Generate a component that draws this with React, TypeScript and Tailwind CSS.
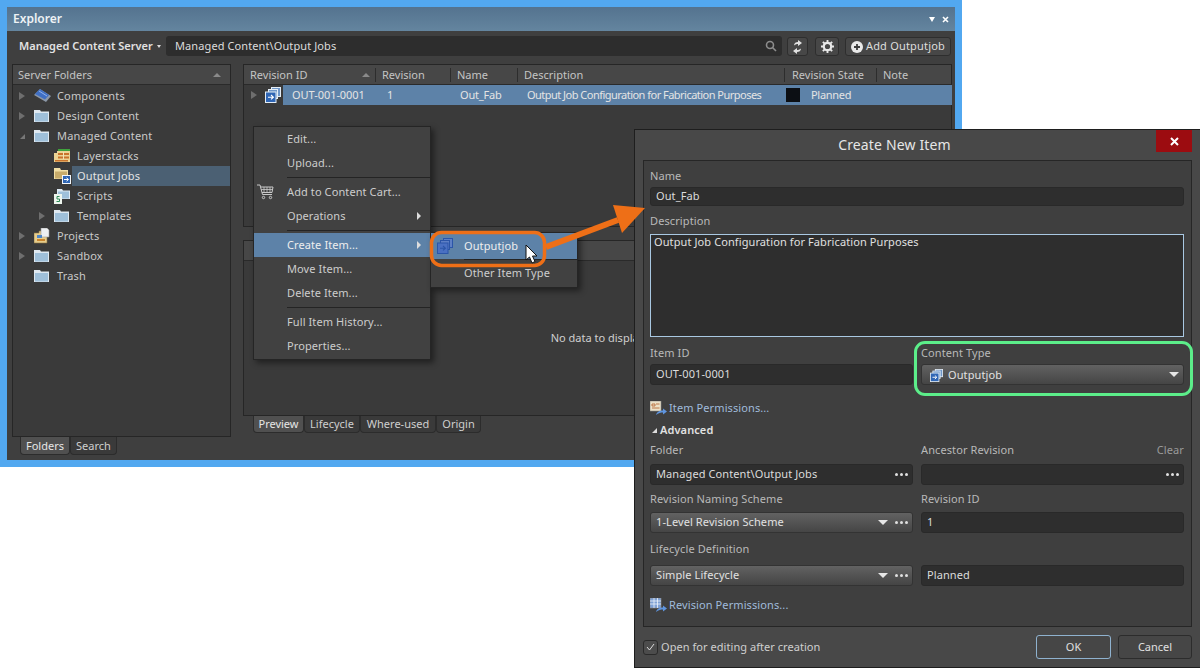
import React from "react";

const Tri = ({ down = false }: { down?: boolean }) =>
  down ? (
    <svg width="7" height="7" viewBox="0 0 7 7"><path d="M6 1V6H1Z" fill="#777" /></svg>
  ) : (
    <svg width="6" height="8" viewBox="0 0 6 8"><path d="M0 0L6 4L0 8Z" fill="#6e6e6e" /></svg>
  );

const Folder = () => (
  <svg width="15" height="14" viewBox="0 0 15 14">
    <path d="M0 1H6L7 2.500H15V13H0Z" fill="#dfe9f1" />
    <rect x="1" y="4" width="13" height="8.500" fill="#9fc0da" />
  </svg>
);

const Chip = () => (
  <svg width="17" height="14" viewBox="0 0 17 14">
    <path d="M6 0L17 7L12 13L0 6Z" fill="#8c98a8" />
    <path d="M6 0L15 6L11 10.5L1 5Z" fill="#3f6fc4" />
    <path d="M5 2L13 7" stroke="#8fb0ea" strokeWidth="1" />
  </svg>
);

const Layers = () => (
  <svg width="16" height="15" viewBox="0 0 16 15">
    <rect x="4" y="0" width="12" height="3" fill="#3fa33c" />
    <path d="M0 4H3V2H16V13H0Z" fill="#ecd394" />
    <path d="M4 4H15V6H4ZM4 7.5H15V9.5H4ZM1 11H14V12.5H1Z" fill="#c9742c" />
    <path d="M9.5 3V10" stroke="#f3e3b8" strokeWidth="1" />
  </svg>
);

const JobsFolder = () => (
  <svg width="17" height="16" viewBox="0 0 17 16">
    <path d="M0 0H6L7 2H14V11H0Z" fill="#f1dfa6" />
    <rect x="1" y="3.5" width="12" height="7" fill="#c7ab6a" />
    <rect x="8" y="7" width="9" height="9" fill="#f3f7fb" />
    <rect x="9" y="8" width="7" height="7" fill="#2f66b5" />
    <path d="M10 11.5H14M12.5 9.8L14.5 11.5L12.5 13.2" stroke="#fff" strokeWidth="1" fill="none" />
  </svg>
);

const ScriptsFolder = () => (
  <svg width="16" height="16" viewBox="0 0 16 16">
    <path d="M3 1H8L9 2.5H16V11H3Z" fill="#dfeaf3" />
    <rect x="4" y="3.5" width="11" height="7" fill="#9fc0da" />
    <rect x="0" y="6" width="8" height="10" fill="#eef5ee" />
    <path d="M5.5 8.5H3V11H5.5V13.5H2.5" stroke="#2e8a57" strokeWidth="1" fill="none" />
  </svg>
);

const Projects = () => (
  <svg width="16" height="16" viewBox="0 0 16 16">
    <path d="M0 5H5V3H13V15H0Z" fill="#e7cd8c" stroke="#8c7442" strokeWidth="0.6" />
    <path d="M7 0H13L15 2V9H7Z" fill="#eef0f2" stroke="#9a9a9a" strokeWidth="0.6" />
    <path d="M3 7H8V10H3Z" fill="#4f86c6" />
    <path d="M3 11H11V13H3Z" fill="#c9842c" />
  </svg>
);

const Stack = ({ dark = false, size = 16 }: { dark?: boolean; size?: number }) => {
  const line = dark ? "#2b55a8" : "#e4edf6";
  const back = dark ? "#5e7fc4" : "#6f97c9";
  const fill = dark ? "#4a70c2" : "#2f66b5";
  const mark = dark ? "#2b55a8" : "#ffffff";
  return (
    <svg width={size} height={size} viewBox="0 0 16 16">
      <rect x="6.5" y="0.5" width="9" height="9" fill={back} stroke={line} />
      <rect x="3.5" y="2.5" width="9" height="9" fill={back} stroke={line} />
      <rect x="0.5" y="5" width="10.5" height="10.5" fill={fill} stroke={line} />
      <path d="M3 10.2H8M6 8L8.4 10.2L6 12.4" stroke={mark} strokeWidth="1.1" fill="none" />
    </svg>
  );
};

const Cart = () => (
  <svg width="17" height="16" viewBox="0 0 17 16" fill="none" stroke="#c9c9c9">
    <path d="M0 1H3L5.5 10.5H15" />
    <path d="M3.5 3H16L15 8.5H5" />
    <path d="M7 3V8.5M10 3V8.5M13 3V8.5M4.2 5.5H15.5" strokeWidth="0.8" />
    <circle cx="6.5" cy="13.5" r="1.2" />
    <circle cx="13.5" cy="13.5" r="1.2" />
  </svg>
);

const Perm = ({ grid = false }: { grid?: boolean }) => (
  <svg width="17" height="15" viewBox="0 0 17 15">
    <rect x="0" y="0" width="11" height="10" fill={grid ? "#7fa2d6" : "#ece2c8"} stroke="#8d8d8d" strokeWidth="0.6" />
    {grid ? (
      <path d="M0 3H11M0 6H11M4 0V10M7.5 0V10" stroke="#eef3fa" strokeWidth="0.8" />
    ) : (
      <path d="M2 3H5V5H2ZM6 3H9.5M2 7H9.5" stroke="#b86b3a" strokeWidth="0.9" fill="none" />
    )}
    <path d="M6 14C7 10.5 10 9.5 13 9.5V7.5L17 10.5L13 13.5V11.5C11 11.5 8.5 12 6 14Z" fill="#5f95df" />
  </svg>
);

const Dots = () => (
  <span className="flex gap-[2px]">
    <span className="w-[3px] h-[3px] rounded-full bg-[#e0e0e0]" />
    <span className="w-[3px] h-[3px] rounded-full bg-[#e0e0e0]" />
    <span className="w-[3px] h-[3px] rounded-full bg-[#e0e0e0]" />
  </span>
);

const Caret = () => (
  <span className="w-0 h-0 border-x-[5px] border-x-transparent border-t-[5px] border-t-[#e6e6e6]" />
);

function TreeRow({
  label, icon, indent = false, arrow, selected = false,
}: { label: string; icon: React.ReactNode; indent?: boolean; arrow?: "right" | "down"; selected?: boolean }) {
  return (
    <div className={"flex items-center h-5 " + (indent ? "pl-[26px]" : "pl-[6px]")}>
      <span className="w-[15px] flex items-center">{arrow && <Tri down={arrow === "down"} />}</span>
      <span className="w-[23px] flex items-center">{icon}</span>
      <span className={"flex-1 h-5 -ml-[5px] pl-[5px] flex items-center " + (selected ? "bg-[#4b6073] text-[#e4e4e4]" : "")}>
        {label}
      </span>
    </div>
  );
}

function MenuItem({ label, icon, sub = false, active = false }: { label: string; icon?: React.ReactNode; sub?: boolean; active?: boolean }) {
  return (
    <div className={"relative flex items-center h-6 pl-[3px] pr-[9px] " + (active ? "bg-[#5d82a8] text-[#eeeeee]" : "")}>
      <span className="w-[30px] flex items-center">{icon}</span>
      <span className="flex-1">{label}</span>
      {sub && <span className="w-0 h-0 border-y-[4px] border-y-transparent border-l-[4px] border-l-[#dddddd]" />}
    </div>
  );
}

const Sep = () => <div className="ml-[33px] h-px bg-[#242424] my-[2px]" />;

const Label = ({ children, className = "" }: { children: React.ReactNode; className?: string }) => (
  <div className={"h-4 flex items-center text-[#b9b9b9] " + className}>{children}</div>
);

const Input = ({ children, className = "" }: { children?: React.ReactNode; className?: string }) => (
  <div className={"flex items-center justify-between pl-[5px] pr-[4px] bg-[#2e2e2e] rounded-[3px] border border-[#292929] text-[#dcdcdc] " + className}>
    {children}
  </div>
);

const Select = ({ children }: { children: React.ReactNode }) => (
  <div className="flex items-center justify-between pl-[5px] pr-[4px] h-[21px] rounded-[3px] border border-[#333] bg-linear-to-b from-[#626262] to-[#454545] text-[#e2e2e2]">
    {children}
  </div>
);

const Tab = ({ label, active = false, className = "" }: { label: string; active?: boolean; className?: string }) => (
  <div className={"flex items-center justify-center pt-px rounded-b-[4px] border border-t-0 border-[#2c2c2c] " + (active ? "bg-[#505050] text-[#e6e6e6] " : "bg-[#3a3a3a] text-[#cfcfcf] ") + className}>
    {label}
  </div>
);

const columns = "grid grid-cols-[132px_75px_67px_267px_92px_75px]";

export default function App() {
  return (
    <div className="relative w-[1200px] h-[668px] overflow-hidden bg-white text-[11px] text-[#c9c9c9] font-['Noto_Sans','Open_Sans',sans-serif]">
      {/* Explorer window */}
      <div className="absolute left-0 top-0 w-[962px] h-[467px] bg-[#52a8f0] p-[7px]">
        <div className="flex flex-col h-full bg-[#3f3f3f]">
          <div className="flex items-center justify-between h-6 pl-[6px] pr-[6px] bg-linear-to-b from-[#54738f] to-[#64859f] text-[12px] font-semibold text-[#eef2f5]">
            <span>Explorer</span>
            <span className="flex items-center gap-[7px] text-white">
              <span className="w-0 h-0 border-x-[3px] border-x-transparent border-t-[5px] border-t-white" />
              <svg width="7" height="7" viewBox="0 0 7 7"><path d="M1 1L6 6M6 1L1 6" stroke="#fff" strokeWidth="1.6" /></svg>
            </span>
          </div>

          <div className="flex items-start h-[33px] pt-[5px] pl-[12px] pr-[4px]">
            <span className="w-[136px] h-5 font-semibold text-[#e2e2e2] flex items-center gap-[4px] shrink-0 whitespace-nowrap">
              Managed Content Server
              <span className="w-0 h-0 border-x-[2.5px] border-x-transparent border-t-[3px] border-t-[#dddddd]" />
            </span>
            <div className="ml-[11px] flex items-center justify-between w-[616px] h-5 pl-[9px] pr-[5px] bg-[#2d2d2d] rounded-[3px] text-[#dcdcdc] tracking-[0.1px]">
              Managed Content\Output Jobs
              <svg width="12" height="12" viewBox="0 0 12 12" fill="none" stroke="#8d8d8d" strokeWidth="1.6"><circle cx="5" cy="5" r="3.5" /><path d="M7.5 7.5L11 11" /></svg>
            </div>
            <div className="ml-[5px] mt-px flex items-center justify-center w-[21px] h-[19px] rounded-[3px] border border-[#2e2e2e] bg-[#474747]">
              <svg width="11" height="14" viewBox="0 0 11 14" fill="#e2e2e2"><path d="M2 5.5C2 3 4 2 6 2V0L10 3L6 6V4C5 4 3.5 4.3 2 5.5Z" /><path d="M9 8.5C9 11 7 12 5 12V14L1 11L5 8V10C6 10 7.5 9.7 9 8.5Z" /></svg>
            </div>
            <div className="ml-[7px] mt-px flex items-center justify-center w-[24px] h-[19px] rounded-[3px] border border-[#2e2e2e] bg-[#474747]">
              <svg width="13" height="13" viewBox="0 0 14 14"><circle cx="7" cy="7" r="4" fill="none" stroke="#e8e8e8" strokeWidth="2.4" /><path d="M7 0V3M7 11V14M0 7H3M11 7H14M2 2L4 4M10 10L12 12M12 2L10 4M4 10L2 12" stroke="#e8e8e8" strokeWidth="2" /></svg>
            </div>
            <div className="ml-[6px] mt-px flex items-center gap-[3px] justify-center w-[106px] h-[19px] rounded-[3px] border border-[#2e2e2e] bg-[#474747] text-[#dedede] tracking-[0.2px]">
              <svg width="12" height="12" viewBox="0 0 12 12"><circle cx="6" cy="6" r="6" fill="#eaeaea" /><path d="M6 3V9M3 6H9" stroke="#3d3d3d" strokeWidth="1.8" /></svg>
              Add Outputjob
            </div>
          </div>

          <div className="flex gap-[12px] pl-[5px]">
            <div className="flex flex-col">
              <div className="w-[219px] h-[373px] border border-[#262626] bg-[#3a3a3a]">
                <div className="flex items-center justify-between h-5 pt-px pl-[5px] pr-[9px] border-b border-[#2a2a2a] bg-[#474747] text-[#c4c4c4]">
                  Server Folders
                  <span className="w-0 h-0 border-x-[4px] border-x-transparent border-b-[4px] border-b-[#8a8a8a]" />
                </div>
                <div className="pt-px tracking-[0.15px]">
                  <TreeRow label="Components" arrow="right" icon={<Chip />} />
                  <TreeRow label="Design Content" arrow="right" icon={<Folder />} />
                  <TreeRow label="Managed Content" arrow="down" icon={<Folder />} />
                  <TreeRow label="Layerstacks" indent icon={<Layers />} />
                  <TreeRow label="Output Jobs" indent selected icon={<JobsFolder />} />
                  <TreeRow label="Scripts" indent icon={<ScriptsFolder />} />
                  <TreeRow label="Templates" indent arrow="right" icon={<Folder />} />
                  <TreeRow label="Projects" arrow="right" icon={<Projects />} />
                  <TreeRow label="Sandbox" arrow="right" icon={<Folder />} />
                  <TreeRow label="Trash" icon={<Folder />} />
                </div>
              </div>
              <div className="flex pl-[8px]">
                <Tab label="Folders" active className="w-[50px] h-[18px]" />
                <Tab label="Search" className="w-[47px] h-[18px]" />
              </div>
            </div>

            <div className="flex flex-col w-[709px]">
              <div className="h-[163px] border border-[#262626] bg-[#3a3a3a]">
                <div className={columns + " h-5 border-b border-[#2a2a2a] bg-[#474747] text-[#c4c4c4] items-center"}>
                  <div className="flex items-center justify-between pl-[6px] pr-[5px] h-[14px] leading-[14px] border-r border-[#2d2d2d]">
                    Revision ID
                    <span className="w-0 h-0 border-x-[4px] border-x-transparent border-b-[4px] border-b-[#8a8a8a]" />
                  </div>
                  <div className="pl-[6px] h-[14px] leading-[14px] border-r border-[#2d2d2d]">Revision</div>
                  <div className="pl-[6px] h-[14px] leading-[14px] border-r border-[#2d2d2d]">Name</div>
                  <div className="pl-[6px] h-[14px] leading-[14px] border-r border-[#2d2d2d]">Description</div>
                  <div className="pl-[7px] h-[14px] leading-[14px] border-r border-[#2d2d2d]">Revision State</div>
                  <div className="pl-[6px] h-[14px] leading-[14px]">Note</div>
                </div>
                <div className={columns + " h-5 items-center text-[#e4e4e4]"}>
                  <div className="flex items-center h-5 pl-[7px]">
                    <span className="w-[14px] flex items-center"><Tri /></span>
                    <span className="w-[18px] flex items-center"><Stack /></span>
                    <span className="flex-1 h-5 pl-[9px] bg-[#5d82a8] flex items-center tracking-[-0.05px]">OUT-001-0001</span>
                  </div>
                  <div className="h-5 pl-[11px] bg-[#5d82a8] flex items-center">1</div>
                  <div className="h-5 pl-[9px] bg-[#5d82a8] flex items-center tracking-[-0.2px]">Out_Fab</div>
                  <div className="h-5 pl-[9px] bg-[#5d82a8] flex items-center tracking-[-0.52px] whitespace-nowrap">Output Job Configuration for Fabrication Purposes</div>
                  <div className="h-5 pl-[1px] bg-[#5d82a8] flex items-center gap-[11px] tracking-[-0.3px]">
                    <span className="w-[14px] h-[14px] bg-[#0c0f14]" />
                    Planned
                  </div>
                  <div className="h-5 bg-[#5d82a8]" />
                </div>
              </div>
              <div className="mt-[13px] h-[176px] flex flex-col border border-[#262626] bg-[#3a3a3a] text-[#cfcfcf]">
                <div className="h-5 border-b border-[#2a2a2a] bg-[#474747]" />
                <div className="flex-1 flex items-center justify-center">No data to display</div>
              </div>
              <div className="flex pl-[10px]">
                <Tab label="Preview" active className="w-[51px] h-[17px]" />
                <Tab label="Lifecycle" className="w-[56px] h-[17px]" />
                <Tab label="Where-used" className="w-[76px] h-[17px]" />
                <Tab label="Origin" className="w-[45px] h-[17px]" />
              </div>
            </div>
          </div>
        </div>
      </div>

      {/* Context menu */}
      <div className="absolute left-[253px] top-[126px] w-[178px] h-[234px] border border-[#252525] bg-[#414141] shadow-[3px_3px_6px_rgba(0,0,0,0.45)] text-[#cdcdcd] tracking-[0.1px]">
        <MenuItem label="Edit..." />
        <MenuItem label="Upload..." />
        <Sep />
        <MenuItem label="Add to Content Cart..." icon={<Cart />} />
        <MenuItem label="Operations" sub />
        <Sep />
        <MenuItem label="Create Item..." sub active />
        <MenuItem label="Move Item..." />
        <MenuItem label="Delete Item..." />
        <Sep />
        <MenuItem label="Full Item History..." />
        <MenuItem label="Properties..." />
      </div>

      {/* Create Item submenu */}
      <div className="absolute left-[430px] top-[232px] w-[148px] h-[56px] border border-[#252525] bg-[#414141] shadow-[3px_3px_6px_rgba(0,0,0,0.45)] text-[#cdcdcd] tracking-[0.1px]">
        <div className="flex items-center h-[26px] pl-[6px] bg-[#5d82a8] text-[#eeeeee]">
          <span className="w-[27px] flex items-center"><Stack dark /></span>
          Outputjob
        </div>
        <div className="ml-[33px] h-px bg-[#242424]" />
        <div className="flex items-center h-[27px] pl-[33px]">Other Item Type</div>
      </div>

      {/* Create New Item dialog */}
      <div className="absolute left-[634px] top-[129px] w-[566px] h-[539px] flex flex-col bg-[#484848] border border-r-0 border-[#1e1e1e]">
        <div className="relative flex items-center justify-center h-[30px] pr-[46px] pb-px text-[14px] tracking-[0.15px] text-[#e6e6e6]">
          <span>Create New Item</span>
          <div className="absolute right-[8px] top-0 flex items-center justify-center w-[36px] h-[22px] bg-[#9c0c10]">
            <svg width="9" height="9" viewBox="0 0 9 9"><path d="M1 1L8 8M8 1L1 8" stroke="#fff" strokeWidth="2" /></svg>
          </div>
        </div>
        <div className="ml-[8px] mr-[8px] h-[467px] border border-[#262626] bg-[#3f3f3f] pl-[6px] pr-[7px] pt-[7px] tracking-[0.1px]">
          <Label>Name</Label>
          <Input className="mt-[3px] h-[19px]">Out_Fab</Input>
          <Label className="mt-[7px]">Description</Label>
          <div className="mt-[5px] h-[103px] border border-[#a9c8e2] bg-[#2e2e2e] pl-[3px] leading-[14px] text-[#e0e0e0]">
            Output Job Configuration for Fabrication Purposes
          </div>
          <div className="mt-[8px] grid grid-cols-[263px_263px] gap-x-[8px]">
            <div>
              <Label>Item ID</Label>
              <Input className="mt-[3px] h-[21px]">OUT-001-0001</Input>
            </div>
            <div>
              <Label>Content Type</Label>
              <div className="mt-[3px]">
                <Select>
                  <span className="flex items-center gap-[5px] pl-[3px] pt-px"><Stack size={13} />Outputjob</span>
                  <Caret />
                </Select>
              </div>
            </div>
          </div>
          <div className="mt-[15px] h-4 flex items-center gap-[2px] text-[#9fbbdc]"><Perm />Item Permissions...</div>
          <div className="mt-[6px] h-4 flex items-center gap-[3px] pl-[2px] font-semibold text-[#e2e2e2]">
            <svg width="5" height="5" viewBox="0 0 5 5"><path d="M5 0V5H0Z" fill="#dddddd" /></svg>
            Advanced
          </div>
          <div className="mt-[4px] grid grid-cols-[263px_263px] gap-x-[8px]">
            <div>
              <Label>Folder</Label>
              <Input className="mt-[6px] h-[21px]">Managed Content\Output Jobs<Dots /></Input>
            </div>
            <div>
              <Label className="justify-between">Ancestor Revision<span className="text-[#9a9a9a]">Clear</span></Label>
              <Input className="mt-[6px] h-[21px]"><span /><Dots /></Input>
            </div>
            <div>
              <Label className="mt-[6px]">Revision Naming Scheme</Label>
              <div className="mt-[5px]">
                <Select>1-Level Revision Scheme<span className="flex items-center gap-[7px]"><Caret /><Dots /></span></Select>
              </div>
            </div>
            <div>
              <Label className="mt-[6px]">Revision ID</Label>
              <Input className="mt-[5px] h-[21px]">1</Input>
            </div>
            <div>
              <Label className="mt-[8px]">Lifecycle Definition</Label>
              <div className="mt-[8px]">
                <Select>Simple Lifecycle<span className="flex items-center gap-[7px]"><Caret /><Dots /></span></Select>
              </div>
            </div>
            <div>
              <div className="mt-[8px] h-4" />
              <Input className="mt-[8px] h-[21px]">Planned</Input>
            </div>
          </div>
          <div className="mt-[11px] h-4 flex items-center gap-[2px] text-[#9fbbdc]"><Perm grid />Revision Permissions...</div>
        </div>
        <div className="flex-1 flex items-center justify-between pl-[8px] pr-[8px]">
          <div className="flex items-center gap-[3px] text-[#cfcfcf] tracking-[0.05px]">
            <span className="flex items-center justify-center w-[15px] h-[15px] rounded-[3px] border border-[#2a2a2a] bg-[#4c4c4c]">
              <svg width="9" height="8" viewBox="0 0 9 8" fill="none"><path d="M1 4L3.5 7L8 1" stroke="#dddddd" strokeWidth="1" /></svg>
            </span>
            Open for editing after creation
          </div>
          <div className="flex gap-[7px] text-[#e0e0e0]">
            <div className="flex items-center justify-center w-[75px] h-[24px] rounded-[3px] border border-[#8fb2cf] bg-[#464646]">OK</div>
            <div className="flex items-center justify-center w-[74px] h-[24px] rounded-[3px] border border-[#2c2c2c] bg-[#464646]">Cancel</div>
          </div>
        </div>
      </div>

      {/* Callouts drawn over the screenshot */}
      <div className="absolute left-[914px] top-[341px] w-[279px] h-[55px] rounded-[11px] border-[3px] border-[#5cee8a]" />
      <svg className="absolute left-0 top-0" width="1200" height="668" viewBox="0 0 1200 668" fill="none">
        <path d="M546 247L618 220" stroke="#ee6f17" strokeWidth="6" />
        <path d="M645 208L613 205L622 233Z" fill="#ee6f17" />
        <rect x="431.5" y="232.5" width="113" height="33" rx="10" stroke="#ee6f17" strokeWidth="3.5" />
        <path d="M526 245V260L529.5 257L532 263L535 261.5L532.5 256H537Z" fill="#fff" stroke="#111" strokeWidth="1" />
      </svg>
    </div>
  );
}
